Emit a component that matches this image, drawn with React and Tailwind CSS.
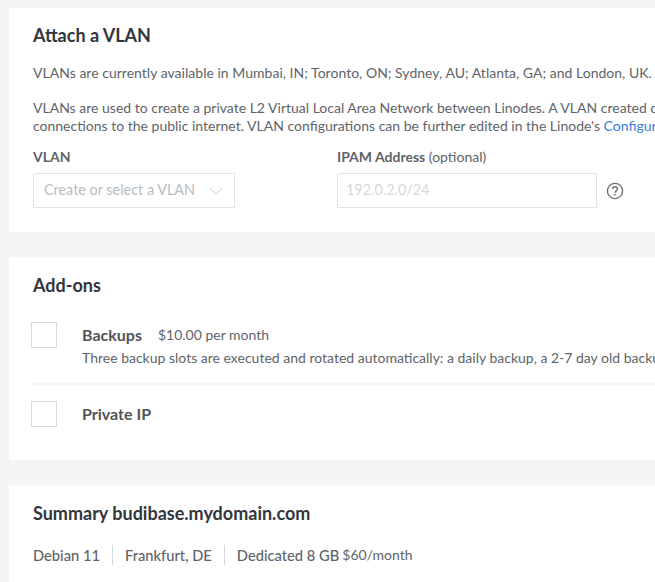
const Card = ({ className, children }) => (
    <section className={`bg-white pl-6 ${className}`}>{children}</section>
);

const App = () => {
    return (
        <div className="h-[582px] w-[655px] overflow-hidden bg-[#f4f5f6] pl-[9px] pt-2 font-['Lato',sans-serif] text-sm text-[#606469]">
            <div className="w-[900px]">
                <Card className="h-[224px] pt-[15px]">
                    <h2 className="text-lg leading-6 font-bold text-[#32363c]">Attach a VLAN</h2>
                    <p className="mt-[17px] text-sm leading-[17px] tracking-[0.02px] whitespace-nowrap">
                        VLANs are currently available in Mumbai, IN; Toronto, ON; Sydney, AU; Atlanta, GA; and London, UK.
                    </p>
                    <p className="mt-[18px] text-sm leading-[18px] whitespace-nowrap">
                        VLANs are used to create a private L2 Virtual Local Area Network between Linodes. A VLAN created or attached to a Linode
                        <br />
                        connections to the public internet. VLAN configurations can be further edited in the Linode's{' '}
                        <a className="text-[#3683dc]">Configuration Profile.</a>
                    </p>
                    <div className="mt-[13px] flex items-start">
                        <div className="w-[304px]">
                            <div className="text-sm leading-[18px] font-bold text-[#606469]">VLAN</div>
                            <div className="mt-[7px] flex h-[35px] w-[202px] items-center justify-between border border-[#e3e4e6] pr-[11px] pl-[10px] text-[14.4px] text-[#b8bcc0]">
                                <span>Create or select a VLAN</span>
                                <svg width="14" height="8" viewBox="0 0 14 8" fill="none" stroke="#dfe1e3" strokeWidth="1.4">
                                    <path d="M1 1l6 6 6-6" />
                                </svg>
                            </div>
                        </div>
                        <div>
                            <div className="text-sm leading-[18px] text-[#606469]">
                                <span className="font-bold">IPAM Address</span> (optional)
                            </div>
                            <div className="mt-[7px] flex items-center">
                                <div className="flex h-[35px] w-[260px] items-center border border-[#e3e4e6] pl-[8px] text-[14.4px] text-[#d6d8da]">192.0.2.0/24</div>
                                <svg className="ml-[9px]" width="18" height="18" viewBox="0 0 18 18" fill="none" stroke="#6e7277">
                                    <circle cx="9" cy="9" r="7.6" strokeWidth="1.4" />
                                    <path d="M6.6 7.1c0-1.4 1-2.3 2.4-2.3s2.4.9 2.4 2.2c0 1.9-2.4 1.9-2.4 3.8" strokeWidth="1.4" />
                                    <path d="M9 12v1.6" strokeWidth="1.5" />
                                </svg>
                            </div>
                        </div>
                    </div>
                </Card>

                <Card className="mt-[25px] h-[203px] pt-[16px]">
                    <h2 className="text-lg leading-6 font-bold text-[#32363c]">Add-ons</h2>
                    <div className="mt-[25px] flex items-start">
                        <div className="-ml-[2px] h-[26px] w-[26px] shrink-0 border border-[#d9dadc]"></div>
                        <div className="ml-[25px] pt-[1px]">
                            <div className="flex items-center leading-[18px]">
                                <span className="text-base font-bold text-[#505459]">Backups</span>
                                <span className="ml-4 text-sm">$10.00 per month</span>
                            </div>
                            <p className="mt-[2px] text-sm leading-[18px] whitespace-nowrap">
                                Three backup slots are executed and rotated automatically: a daily backup, a 2-7 day old backup, and an 8-14 day old backup.
                            </p>
                        </div>
                    </div>
                    <div className="mt-[16px] h-[2px] bg-[#f4f5f6]"></div>
                    <div className="mt-[16px] flex items-center">
                        <div className="-ml-[2px] h-[26px] w-[26px] shrink-0 border border-[#d9dadc]"></div>
                        <span className="ml-[25px] text-base leading-[18px] font-bold text-[#505459]">Private IP</span>
                    </div>
                </Card>

                <Card className="mt-[25px] h-[100px] pt-[16px]">
                    <h2 className="text-lg leading-6 font-bold text-[#32363c]">Summary budibase.mydomain.com</h2>
                    <div className="mt-[20px] flex items-center text-sm leading-5">
                        <span className="text-[14.7px] font-medium">Debian 11</span>
                        <span className="mx-3 h-5 w-px bg-[#d6d8da]"></span>
                        <span className="text-[14.7px] font-medium">Frankfurt, DE</span>
                        <span className="mx-3 h-5 w-px bg-[#d6d8da]"></span>
                        <span className="text-[14.7px] font-medium">Dedicated 8 GB</span>
                        <span className="ml-[3px]">$60/month</span>
                    </div>
                </Card>
            </div>
        </div>
    );
};

export default App;
